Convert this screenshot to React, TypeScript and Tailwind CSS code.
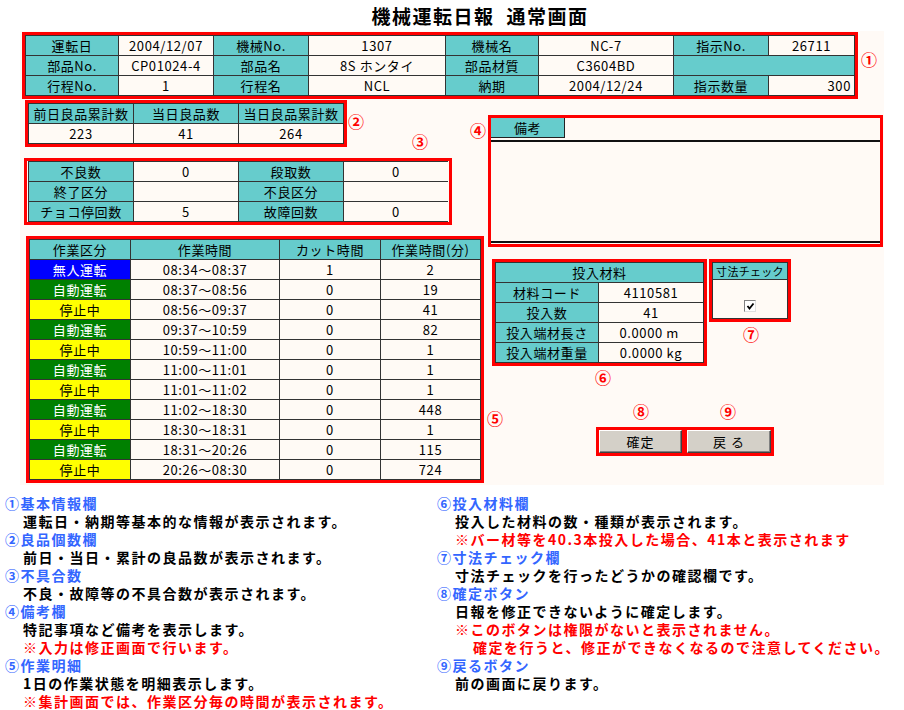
import React from "react";

type CellProps = { children?: React.ReactNode; className?: string };

const H = ({ children, className = "" }: CellProps) => (
  <div className={`bg-[#66cccc] flex items-center justify-center whitespace-pre ${className}`}>{children}</div>
);
const D = ({ children, className = "" }: CellProps) => (
  <div className={`bg-[#fffaf5] flex items-center justify-center whitespace-pre ${className}`}>{children}</div>
);

const workRows: [string, string, string, string, string][] = [
  ["無人運転", "blue", "08:34～08:37", "1", "2"],
  ["自動運転", "green", "08:37～08:56", "0", "19"],
  ["停止中", "yellow", "08:56～09:37", "0", "41"],
  ["自動運転", "green", "09:37～10:59", "0", "82"],
  ["停止中", "yellow", "10:59～11:00", "0", "1"],
  ["自動運転", "green", "11:00～11:01", "0", "1"],
  ["停止中", "yellow", "11:01～11:02", "0", "1"],
  ["自動運転", "green", "11:02～18:30", "0", "448"],
  ["停止中", "yellow", "18:30～18:31", "0", "1"],
  ["自動運転", "green", "18:31～20:26", "0", "115"],
  ["停止中", "yellow", "20:26～08:30", "0", "724"],
];

const kindClass: Record<string, string> = {
  blue: "bg-[#0000ff] text-white",
  green: "bg-[#008000] text-white",
  yellow: "bg-[#ffff00] text-black",
};

const Marker = ({ n, x, y }: { n: string; x: number; y: number }) => (
  <span
    className="absolute -translate-x-1/2 -translate-y-1/2 text-[16px] leading-none font-bold text-[#ff0000]"
    style={{ left: x, top: y }}
  >
    {n}
  </span>
);

type Line = { t: string; c: "h" | "b" | "r"; indent: number };

const leftLines: Line[] = [
  { t: "①基本情報欄", c: "h", indent: 0 },
  { t: "運転日・納期等基本的な情報が表示されます。", c: "b", indent: 18 },
  { t: "②良品個数欄", c: "h", indent: 0 },
  { t: "前日・当日・累計の良品数が表示されます。", c: "b", indent: 18 },
  { t: "③不具合数", c: "h", indent: 0 },
  { t: "不良・故障等の不具合数が表示されます。", c: "b", indent: 18 },
  { t: "④備考欄", c: "h", indent: 0 },
  { t: "特記事項など備考を表示します。", c: "b", indent: 18 },
  { t: "※入力は修正画面で行います。", c: "r", indent: 18 },
  { t: "⑤作業明細", c: "h", indent: 0 },
  { t: "1日の作業状態を明細表示します。", c: "b", indent: 18 },
  { t: "※集計画面では、作業区分毎の時間が表示されます。", c: "r", indent: 18 },
];

const rightLines: Line[] = [
  { t: "⑥投入材料欄", c: "h", indent: 0 },
  { t: "投入した材料の数・種類が表示されます。", c: "b", indent: 18 },
  { t: "※バー材等を40.3本投入した場合、41本と表示されます", c: "r", indent: 18 },
  { t: "⑦寸法チェック欄", c: "h", indent: 0 },
  { t: "寸法チェックを行ったどうかの確認欄です。", c: "b", indent: 18 },
  { t: "⑧確定ボタン", c: "h", indent: 0 },
  { t: "日報を修正できないように確定します。", c: "b", indent: 18 },
  { t: "※このボタンは権限がないと表示されません。", c: "r", indent: 18 },
  { t: "確定を行うと、修正ができなくなるので注意してください。", c: "r", indent: 36 },
  { t: "⑨戻るボタン", c: "h", indent: 0 },
  { t: "前の画面に戻ります。", c: "b", indent: 18 },
];

const lineColor: Record<string, string> = {
  h: "text-[#3366ff]",
  b: "text-black",
  r: "text-[#ff0000]",
};

const TextCol = ({ lines }: { lines: Line[] }) => (
  <div className="flex flex-col">
    {lines.map((l, i) => (
      <div
        key={i}
        className={`h-[18px] leading-[18px] whitespace-nowrap ${lineColor[l.c]}`}
        style={{ paddingLeft: l.indent }}
      >
        {l.t}
      </div>
    ))}
  </div>
);

export default function App() {
  return (
    <div className="relative w-[904px] h-[710px] bg-white overflow-hidden font-['Noto_Sans_CJK_JP','Noto_Sans',sans-serif] text-black">
      {/* Title */}
      <div className="h-[31px] pl-[56px] flex items-center justify-center">
        <span className="text-[19px] font-bold tracking-[1.5px] leading-none">機械運転日報</span>
        <span className="ml-[12px] text-[19px] font-bold tracking-[1.5px] leading-none">通常画面</span>
      </div>

      {/* Form panel */}
      <div className="ml-[20px] w-[864px] h-[454px] bg-[#fffaf6] text-[13px] tracking-[0.6px]">
        {/* Box 1 */}
        <div className="ml-[2px] pt-px">
          <div className="w-[836px] border-[3px] border-[#ff0000] bg-[#fffaf5]">
            <div className="grid grid-cols-[92px_94px_94px_136px_92px_134px_94px_85px] grid-rows-[19px_19px_19px] gap-px p-px bg-[#333333] leading-none">
              <H>運転日</H>
              <D>2004/12/07</D>
              <H>機械No.</H>
              <D>1307</D>
              <H>機械名</H>
              <D>NC-7</D>
              <H>指示No.</H>
              <D>26711</D>
              <H>部品No.</H>
              <D>CP01024-4</D>
              <H>部品名</H>
              <D>8S ホンタイ</D>
              <H>部品材質</H>
              <D>C3604BD</D>
              <H className="col-span-2" />
              <H>行程No.</H>
              <D>1</D>
              <H>行程名</H>
              <D>NCL</D>
              <H>納期</H>
              <D>2004/12/24</D>
              <H>指示数量</H>
              <D className="!justify-end pr-[3px]">300</D>
            </div>
          </div>
        </div>

        <div className="flex">
          {/* Left column */}
          <div className="w-[468px] flex flex-col">
            {/* Box 2 */}
            <div className="ml-[5px] mt-px w-[322px] border-[3px] border-[#ff0000]">
              <div className="grid grid-cols-[104px_104px_104px] grid-rows-[19px_19px] gap-px p-px bg-[#333333] leading-none">
                <H>前日良品累計数</H>
                <H>当日良品数</H>
                <H>当日良品累計数</H>
                <D>223</D>
                <D>41</D>
                <D>264</D>
              </div>
            </div>

            {/* Box 3 */}
            <div className="ml-[4px] mt-[11px] w-[428px] border-[3px] border-[#ff0000] bg-[#fffaf6] px-px">
              <div className="grid grid-cols-[104px_104px_104px_104px] grid-rows-[19px_19px_19px] gap-px p-px bg-[#333333] leading-none">
                <H>不良数</H>
                <D>0</D>
                <H>段取数</H>
                <D>0</D>
                <H>終了区分</H>
                <D />
                <H>不良区分</H>
                <D />
                <H>チョコ停回数</H>
                <D>5</D>
                <H>故障回数</H>
                <D>0</D>
              </div>
            </div>

            {/* Box 5 */}
            <div className="ml-[6px] mt-[11px] w-[458px] border-[3px] border-[#ff0000]">
              <div className="grid grid-cols-[100px_148px_100px_99px] auto-rows-[19px] gap-px p-px bg-[#333333] leading-none">
                <H>作業区分</H>
                <H>作業時間</H>
                <H>カット時間</H>
                <H>作業時間(分)</H>
                {workRows.map((r, i) => (
                  <React.Fragment key={i}>
                    <div className={`flex items-center justify-center ${kindClass[r[1]]}`}>{r[0]}</div>
                    <D>{r[2]}</D>
                    <D>{r[3]}</D>
                    <D>{r[4]}</D>
                  </React.Fragment>
                ))}
              </div>
            </div>
          </div>

          {/* Right column */}
          <div className="flex flex-col">
            {/* Box 4 */}
            <div className="mt-[16px] w-[395px] h-[132px] border-[3px] border-[#ff0000] bg-[#fffaf5] flex flex-col">
              <div className="h-[20px] flex">
                <div className="w-[74px] h-[20px] bg-[#66cccc] border-r border-b border-[#222222] flex items-center justify-center leading-none">
                  備考
                </div>
              </div>
              <div className="mt-[2px] h-[2px] bg-[#111111]" />
              <div className="h-[99px]" />
              <div className="h-[2px] bg-[#111111]" />
            </div>

            <div className="ml-[4px] mt-[12px] flex items-start gap-[2px]">
              {/* Box 6 */}
              <div className="w-[215px] border-[3px] border-[#ff0000]">
                <div className="grid grid-cols-[102px_104px] grid-rows-[19px_19px_19px_19px_19px] gap-px p-px bg-[#333333] leading-none">
                  <H className="col-span-2">投入材料</H>
                  <H>材料コード</H>
                  <D>4110581</D>
                  <H>投入数</H>
                  <D>41</D>
                  <H>投入端材長さ</H>
                  <D>{"0.0000 m "}</D>
                  <H>投入端材重量</H>
                  <D>0.0000 kg</D>
                </div>
              </div>

              {/* Box 7 */}
              <div className="w-[82px] border-[3px] border-[#ff0000]">
                <div className="grid grid-cols-[74px] grid-rows-[16px_38px] gap-px p-px bg-[#333333] leading-none">
                  <H className="text-[11px] tracking-[0.3px]">寸法チェック</H>
                  <div className="bg-[#fffaf5] flex items-end justify-center pb-[6px]">
                    <div className="w-[12px] h-[12px] border border-t-[#808080] border-l-[#808080] border-b-[#e0e0e0] border-r-[#e0e0e0] bg-white flex items-center justify-center">
                      <svg width="9" height="9" viewBox="0 0 9 9">
                        <path d="M1.5 4 L3.5 6.5 L7.5 1.5" stroke="#000" strokeWidth="1.8" fill="none" />
                      </svg>
                    </div>
                  </div>
                </div>
              </div>
            </div>

            {/* Buttons */}
            <div className="ml-[108px] mt-[61px] w-[178px] h-[29px] bg-[#ff0000] p-[3px] flex gap-[5px]">
              <button className="w-[83px] h-[23px] bg-[#d4d0c8] border border-t-white border-l-white border-b-[#404040] border-r-[#404040] shadow-[inset_-1px_-1px_0_#808080] flex items-center justify-center text-[13px] leading-none tracking-[1px]">
                確定
              </button>
              <button className="w-[84px] h-[23px] bg-[#d4d0c8] border border-t-white border-l-white border-b-[#404040] border-r-[#404040] shadow-[inset_-1px_-1px_0_#808080] flex items-center justify-center text-[13px] leading-none whitespace-pre tracking-[1px]">
                戻 る
              </button>
            </div>
          </div>
        </div>
      </div>

      {/* Description */}
      <div className="flex pt-[9px] text-[14px] font-bold tracking-[1.5px]">
        <div className="w-[437px] pl-[5px]">
          <TextCol lines={leftLines} />
        </div>
        <div>
          <TextCol lines={rightLines} />
        </div>
      </div>

      {/* Annotation markers */}
      <Marker n="①" x={869} y={59} />
      <Marker n="②" x={356} y={121} />
      <Marker n="③" x={420} y={141} />
      <Marker n="④" x={478} y={130} />
      <Marker n="⑤" x={495} y={418} />
      <Marker n="⑥" x={603} y={377} />
      <Marker n="⑦" x={751} y={334} />
      <Marker n="⑧" x={641} y={411} />
      <Marker n="⑨" x={728} y={411} />
    </div>
  );
}
